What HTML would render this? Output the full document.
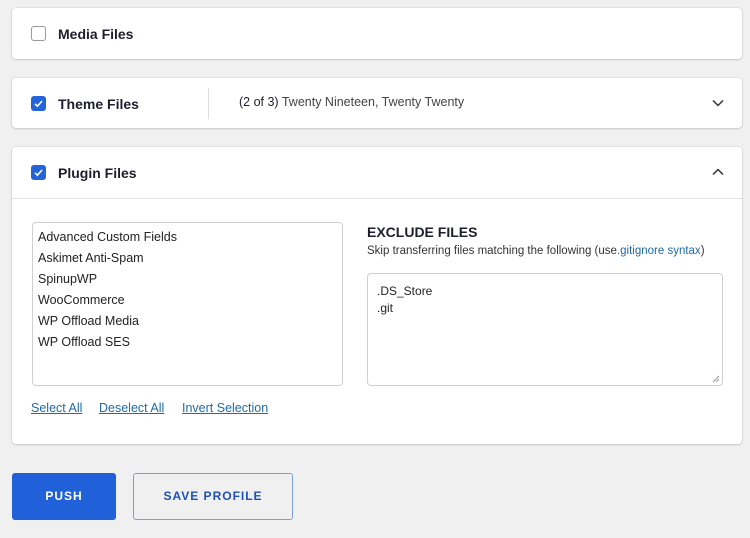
<!DOCTYPE html>
<html><head><style>
*{box-sizing:border-box;margin:0;padding:0}
body{width:750px;height:538px;background:#f0f0f0;font-family:"Liberation Sans",sans-serif;color:#1e1e1e;position:relative;overflow:hidden}
.card{position:absolute;left:12px;width:730px;background:#fff;border-radius:4px;box-shadow:0 1px 2px rgba(0,0,0,.12),0 0 0 1px #e3e3e3}
.cb{position:absolute;left:19px;top:18px;width:15px;height:15px;border-radius:3px}
.cb.off{border:1.5px solid #9a9a9a;background:#fff}
.cb.on{background:#2563d8}
.ttl{position:absolute;left:46px;top:18px;font-size:14px;font-weight:bold;color:#1e1e2e}
.chev{position:absolute;right:18px;top:20px}
a{color:#1f6aa8}
.lnk{position:absolute;top:401px;font-size:12.5px;color:#1f6aa8;text-decoration:underline}
</style></head><body>
<div class="card" style="top:8px;height:51px">
 <div class="cb off"></div><div class="ttl">Media Files</div>
</div>
<div class="card" style="top:78px;height:50px">
 <div class="cb on"><svg width="15" height="15"><path d="M4 7.8l2.4 2.4L11 5" stroke="#fff" stroke-width="1.6" fill="none"/></svg></div>
 <div class="ttl">Theme Files</div>
 <div style="position:absolute;left:196px;top:10px;width:1px;height:31px;background:#ddd"></div>
 <div style="position:absolute;left:227px;top:17px;font-size:12.5px;color:#444"><span style="color:#1e1e2e">(2 of 3)</span> Twenty Nineteen, Twenty Twenty</div>
 <svg class="chev" width="12" height="10"><path d="M1 2.5l5 5 5-5" stroke="#333" stroke-width="1.5" fill="none"/></svg>
</div>
<div class="card" style="top:147px;height:297px">
 <div class="cb on"><svg width="15" height="15"><path d="M4 7.8l2.4 2.4L11 5" stroke="#fff" stroke-width="1.6" fill="none"/></svg></div>
 <div class="ttl">Plugin Files</div>
 <svg class="chev" width="12" height="10" style="top:20px"><path d="M1 7.5l5-5 5 5" stroke="#333" stroke-width="1.5" fill="none"/></svg>
 <div style="position:absolute;left:0;top:51px;width:100%;height:1px;background:#e3e3e3"></div>
 <div style="position:absolute;left:20px;top:75px;width:311px;height:164px;border:1px solid #d0d0d0;border-radius:4px;padding:4px 5px;font-size:12.5px;line-height:21px;color:#222">
  Advanced Custom Fields<br>Askimet Anti-Spam<br>SpinupWP<br>WooCommerce<br>WP Offload Media<br>WP Offload SES
 </div>
 <div style="position:absolute;left:355px;top:77px;font-size:14px;font-weight:bold;color:#1e1e2e">EXCLUDE FILES</div>
 <div style="position:absolute;left:355px;top:98px;font-size:11.5px;color:#333">Skip transferring files matching the following (use<a style="text-decoration:none">.gitignore syntax</a>)</div>
 <div style="position:absolute;left:355px;top:126px;width:356px;height:113px;border:1px solid #d0d0d0;border-radius:4px;padding:9px 9px;font-size:12px;line-height:17px;color:#222">.DS_Store<br>.git
  <svg style="position:absolute;right:2px;bottom:2px" width="8" height="8"><path d="M7 1L1 7M7 4L4 7" stroke="#999"/></svg>
 </div>
</div>
<div class="lnk" style="left:31px">Select All</div>
<div class="lnk" style="left:99px">Deselect All</div>
<div class="lnk" style="left:182px">Invert Selection</div>
<div style="position:absolute;left:12px;top:473px;width:104px;height:47px;background:#2060d8;border-radius:3px;color:#fff;font-weight:bold;font-size:12px;letter-spacing:1px;text-align:center;line-height:47px">PUSH</div>
<div style="position:absolute;left:133px;top:473px;width:160px;height:47px;border:1.5px solid #7a9fe0;border-radius:3px;color:#1f4fb8;font-weight:bold;font-size:12px;letter-spacing:1px;text-align:center;line-height:44px">SAVE PROFILE</div>
</body></html>
